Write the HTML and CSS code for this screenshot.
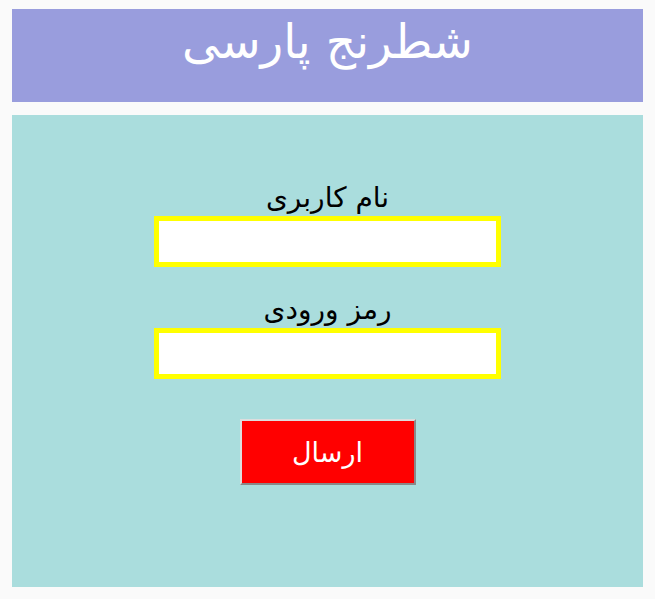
FILE: index.html
```html
<!DOCTYPE html>
<html lang="fa" dir="rtl">
<head>
    <meta charset="UTF-8">
    <meta name="viewport" content="width=device-width, initial-scale=1.0">
    <title>شطرنج پارسی</title>
    <link rel="stylesheet" href="styles.css">
</head>
<body>
    <div id="header">
        <h1>شطرنج پارسی</h1>
    </div>
    <div id="content">
        <form id="login" onsubmit="return false">
            <label for="username">نام کاربری</label>
            <input type="text" id="username" class="field">
            <label for="password">رمز ورودی</label>
            <input type="password" id="password" class="field">
            <button type="submit" class="btn">ارسال</button>
        </form>
    </div>
</body>
</html>
```

FILE: styles.css
```css
:root{
    --header-color: #999ddd;
    --panel-color: #aadddd;
    --field-border: #ffff00;
}
*{
    box-sizing: border-box;
}
body{
    margin: 9px 12px 12px;
    background-color: #fafafa;
    font-family: "DejaVu Sans", sans-serif;
}
#header
{
    background-color: var(--header-color);
    height: 93px;
    text-align: center;
    padding-top: 5px;
}
#header h1
{
    margin: 0;
    color: white;
    font-size: 47px;
    font-weight: normal;
}
#content
{
    margin-top: 13px;
    background-color: var(--panel-color);
    height: 472px;
    padding-top: 64px;
}
#login
{
    display: flex;
    flex-direction: column;
    align-items: center;
}
#login label
{
    font-size: 28px;
    line-height: 37px;
}
.field{
    width: 347px;
    height: 51px;
    border: 5px solid var(--field-border);
    margin-bottom: 24px;
    background: white;
}
.btn{
    margin-top: 16px;
    width: 176px;
    height: 66px;
    background-color: red;
    color: white;
    font-family: "DejaVu Sans", sans-serif;
    font-size: 27px;
    border: 2px outset #ddd;
}
```
